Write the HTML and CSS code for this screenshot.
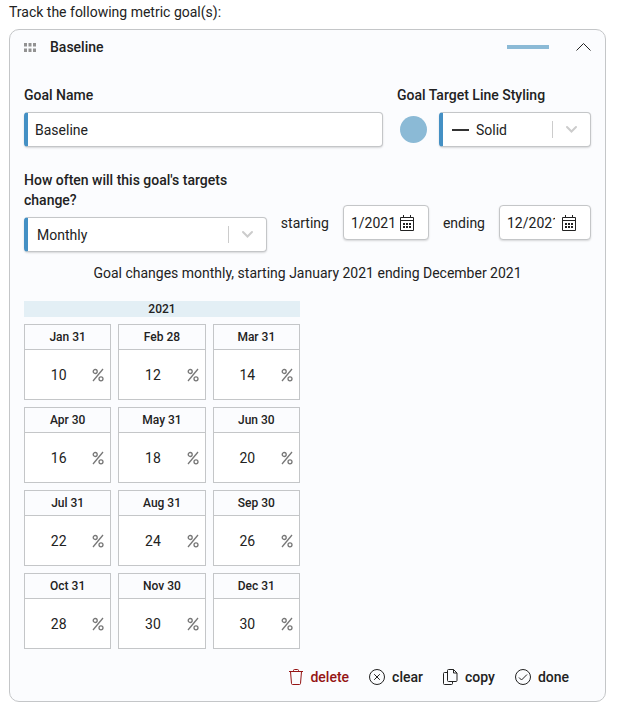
FILE: index.html
```html
<!DOCTYPE html>
<html lang="en">
<head>
    <meta charset="UTF-8">
    <meta name="viewport" content="width=device-width, initial-scale=1.0">
    <title>Metric goals</title>
    <link rel="stylesheet" href="styles.css">
</head>
<body>

<p class="intro">Track the following metric goal(s):</p>

<!-- shared icons -->
<svg class="symbols" aria-hidden="true">
    <symbol id="percent" viewBox="0 0 12 14">
        <path d="M11 1 1 13" />
        <circle cx="3.200" cy="3.500" r="2" />
        <circle cx="9" cy="10.800" r="2" />
    </symbol>
    <symbol id="calendar" viewBox="0 0 14 16">
        <path d="M.5 2.5h13v13H.5zM.5 5.5h13M3.5 0v3M10.5 0v3" />
        <path class="dots" d="M6 8h2v2H6zM9 8h2v2H9zM3 11h2v2H3zM6 11h2v2H6zM9 11h2v2H9zM3 8h2v2H3z" />
    </symbol>
    <symbol id="arrow" viewBox="0 0 13 9">
        <path d="M2 2l4.500 4.500L11 2" />
    </symbol>
</svg>

<form class="goal" onsubmit="return false">
    <div class="goal-header">
        <svg class="handle" width="12" height="9" viewBox="0 0 12 9" aria-hidden="true">
            <path d="M0 0h3v3.500H0zM4.500 0h3v3.500h-3zM9 0h3v3.500H9zM0 5.500h3V9H0zM4.500 5.500h3V9h-3zM9 5.500h3V9H9z" />
        </svg>
        <h2>Baseline</h2>
        <span class="line-preview"></span>
        <button type="button" class="collapse" aria-label="Collapse">
            <svg width="15" height="10" viewBox="0 0 15 10"><path d="M.5 8.500 7.500 1.500l7 7" /></svg>
        </button>
    </div>

    <div class="row">
        <div class="field name-field">
            <label for="goalName">Goal Name</label>
            <input type="text" id="goalName" class="box required" value="Baseline">
        </div>
        <div class="field style-field">
            <label for="lineStyle">Goal Target Line Styling</label>
            <div class="style-controls">
                <button type="button" class="color" aria-label="Line color"></button>
                <div class="box required select">
                    <span class="solid-line"></span>
                    <select id="lineStyle">
                        <option>Solid</option>
                    </select>
                    <svg class="arrow"><use href="#arrow" /></svg>
                </div>
            </div>
        </div>
    </div>

    <div class="row frequency">
        <div class="field frequency-field">
            <label for="frequency">How often will this goal's targets change?</label>
            <div class="box required select">
                <select id="frequency">
                    <option>Monthly</option>
                </select>
                <svg class="arrow"><use href="#arrow" /></svg>
            </div>
        </div>
        <div class="range">
            <label for="starting">starting</label>
            <div class="box date">
                <input type="text" id="starting" value="1/2021">
                <svg class="calendar"><use href="#calendar" /></svg>
            </div>
            <label for="ending">ending</label>
            <div class="box date end-date">
                <input type="text" id="ending" value="12/2021">
                <svg class="calendar"><use href="#calendar" /></svg>
            </div>
        </div>
    </div>

    <p class="summary">Goal changes monthly, starting January 2021 ending December 2021</p>

    <div class="targets">
        <h3>2021</h3>
        <div class="months">
            <div class="month"><label for="m1">Jan 31</label><div class="value"><input type="text" id="m1" value="10"><svg class="percent"><use href="#percent" /></svg></div></div>
            <div class="month"><label for="m2">Feb 28</label><div class="value"><input type="text" id="m2" value="12"><svg class="percent"><use href="#percent" /></svg></div></div>
            <div class="month"><label for="m3">Mar 31</label><div class="value"><input type="text" id="m3" value="14"><svg class="percent"><use href="#percent" /></svg></div></div>
            <div class="month"><label for="m4">Apr 30</label><div class="value"><input type="text" id="m4" value="16"><svg class="percent"><use href="#percent" /></svg></div></div>
            <div class="month"><label for="m5">May 31</label><div class="value"><input type="text" id="m5" value="18"><svg class="percent"><use href="#percent" /></svg></div></div>
            <div class="month"><label for="m6">Jun 30</label><div class="value"><input type="text" id="m6" value="20"><svg class="percent"><use href="#percent" /></svg></div></div>
            <div class="month"><label for="m7">Jul 31</label><div class="value"><input type="text" id="m7" value="22"><svg class="percent"><use href="#percent" /></svg></div></div>
            <div class="month"><label for="m8">Aug 31</label><div class="value"><input type="text" id="m8" value="24"><svg class="percent"><use href="#percent" /></svg></div></div>
            <div class="month"><label for="m9">Sep 30</label><div class="value"><input type="text" id="m9" value="26"><svg class="percent"><use href="#percent" /></svg></div></div>
            <div class="month"><label for="m10">Oct 31</label><div class="value"><input type="text" id="m10" value="28"><svg class="percent"><use href="#percent" /></svg></div></div>
            <div class="month"><label for="m11">Nov 30</label><div class="value"><input type="text" id="m11" value="30"><svg class="percent"><use href="#percent" /></svg></div></div>
            <div class="month"><label for="m12">Dec 31</label><div class="value"><input type="text" id="m12" value="30"><svg class="percent"><use href="#percent" /></svg></div></div>
        </div>
    </div>

    <div class="actions">
        <button type="button" class="delete">
            <svg width="14" height="16" viewBox="0 0 14 16"><path d="M0 2.500h14M4.500 2.500v-1q0-1 1-1h3q1 0 1 1v1M1.500 2.500l1 12q.1 1 1 1h7q.9 0 1-1l1-12" /></svg>
            delete
        </button>
        <button type="button">
            <svg width="16" height="16" viewBox="0 0 16 16"><circle cx="8" cy="8" r="7.500" /><path d="m5.200 5.200 5.600 5.600M10.800 5.200l-5.600 5.600" /></svg>
            clear
        </button>
        <button type="button">
            <svg width="15" height="16" viewBox="0 0 15 16"><path d="M5.500.5h5l3.500 3.500v7.500q0 1-1 1H5.500q-1 0-1-1v-10q0-1 1-1zM10.500.5v3.500h3.500M4.500 3.500h-3q-1 0-1 1v10q0 1 1 1h7q1 0 1-1v-2" /></svg>
            copy
        </button>
        <button type="button">
            <svg width="16" height="16" viewBox="0 0 16 16"><circle cx="8" cy="8" r="7.500" /><path d="m4 8.500 2.500 2.500L12 5.500" /></svg>
            done
        </button>
    </div>
</form>

</body>
</html>
```
FILE: styles.css
```css
* {
    box-sizing: border-box;
}
body {
    font-family: Roboto, "Liberation Sans", sans-serif;
    font-size: 14px;
    line-height: 20px;
    color: #222222;
    background-color: #ffffff;
    margin: 0;
    padding: 2px 11px 9px 9px;
}
p, h2, h3 {
    margin: 0;
}
input, select, button {
    font: inherit;
    color: inherit;
    margin: 0;
    padding: 0;
    border: none;
    background: none;
}
button {
    cursor: pointer;
}
svg {
    display: block;
    flex: none;
    fill: none;
    stroke: currentColor;
}
.symbols {
    position: absolute;
    width: 0;
    height: 0;
}
.intro {
    margin-bottom: 7px;
}
.goal {
    padding: 0 14px 14px;
    background-color: #fbfcfe;
    border: 1px solid #c4c6c8;
    border-radius: 10px;
}
.goal-header {
    display: flex;
    align-items: center;
    height: 34px;
    margin-bottom: 21px;
}
.goal-header h2 {
    flex: 1;
    margin-left: 14px;
    font-size: 14px;
    font-weight: 500;
}
.handle {
    fill: #929292;
    stroke: none;
}
.line-preview {
    width: 42px;
    height: 4px;
    margin-right: 27px;
    background-color: #8bbad6;
}
.row {
    display: flex;
    gap: 14px;
    margin-bottom: 23px;
}
.field label {
    display: block;
    margin-bottom: 7px;
    font-weight: 500;
}
.name-field {
    flex: 1;
}
.style-field {
    width: 194px;
}
.style-controls {
    display: flex;
    align-items: center;
    gap: 12px;
    padding-left: 3px;
}
.color {
    flex: none;
    width: 27px;
    height: 27px;
    border-radius: 50%;
    background-color: #8bbad6;
}
.box {
    display: flex;
    align-items: center;
    width: 100%;
    height: 35px;
    background-color: #ffffff;
    border: 1px solid #c4c6c8;
    border-radius: 4px;
    box-shadow: 0 1px 2px rgba(0, 0, 0, 0.15);
}
.required {
    border-left: 4px solid #4490c4;
}
input.box {
    padding: 0 7px;
}
.select {
    padding-left: 9px;
}
.select select {
    flex: 1;
    min-width: 0;
    height: 33px;
    appearance: none;
}
.solid-line {
    width: 17px;
    height: 2px;
    margin-right: 7px;
    background-color: #333333;
}
.arrow {
    width: 38px;
    height: 17px;
    padding: 4px 12px;
    border-left: 1px solid #cccccc;
    color: #cccccc;
    stroke-width: 2;
    stroke-linecap: round;
}
.frequency {
    align-items: flex-end;
    margin-bottom: 11px;
}
.frequency-field {
    flex: 1;
}
.range {
    display: flex;
    align-items: center;
    gap: 14px;
    margin-bottom: 12px;
}
.date {
    width: 86px;
    padding: 0 14px 0 7px;
}
.date input {
    flex: 1;
    width: 0;
    min-width: 0;
}
.end-date {
    width: 92px;
}
.end-date input {
    margin-right: 7px;
}
.calendar {
    width: 14px;
    height: 16px;
}
.dots {
    fill: currentColor;
    stroke: none;
}
.summary {
    margin-bottom: 18px;
    text-align: center;
}
.targets {
    max-width: 276px;
    font-size: 12px;
}
.targets h3 {
    margin-bottom: 7px;
    font-size: 12px;
    font-weight: 500;
    line-height: 16px;
    text-align: center;
    background-color: #e3eff5;
}
.months {
    display: grid;
    grid-template-columns: repeat(3, minmax(0, 1fr));
    gap: 7px;
}
.month {
    border: 1px solid #c4c6c8;
}
.month label {
    display: block;
    border-bottom: 1px solid #c4c6c8;
    font-weight: 500;
    line-height: 24px;
    text-align: center;
}
.value {
    display: flex;
    align-items: center;
    height: 49px;
    padding-right: 6px;
    background-color: #ffffff;
    font-size: 14px;
}
.value input {
    flex: 1;
    width: 0;
    min-width: 0;
    text-align: center;
}
.percent {
    width: 12px;
    height: 14px;
    color: #777777;
    stroke-width: 1.3;
}
.actions {
    display: flex;
    justify-content: flex-end;
    gap: 20px;
    margin-top: 18px;
    padding-right: 22px;
}
.actions button {
    display: flex;
    align-items: center;
    gap: 7px;
    font-weight: 500;
}
.actions .delete {
    color: #951414;
}
```
